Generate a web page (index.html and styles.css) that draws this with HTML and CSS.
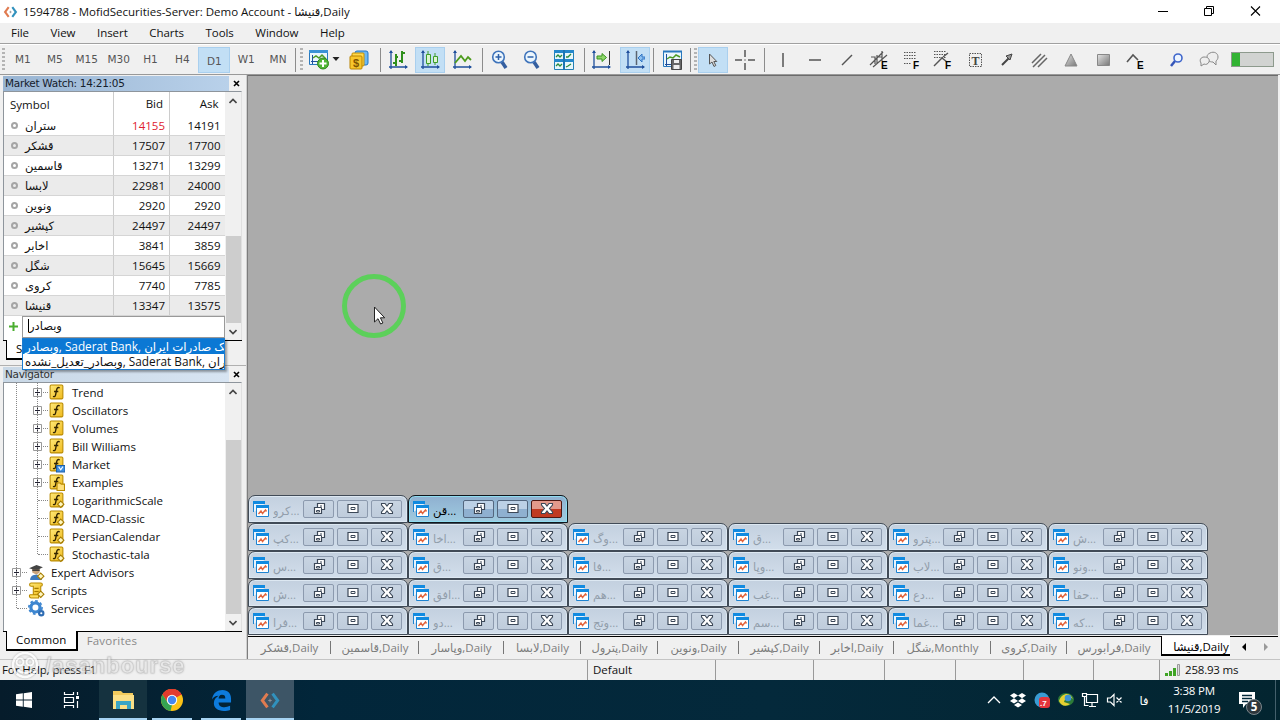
FILE: index.html
```
<!DOCTYPE html>
<html lang="en">
<head>
    <meta charset="UTF-8">
    <meta name="viewport" content="width=device-width, initial-scale=1.0">
    <title>1594788 - MofidSecurities-Server: Demo Account</title>
    <link rel="stylesheet" href="styles.css">
</head>
<body>
    <svg class="defs" width="0" height="0">
        <linearGradient id="gold" x1="0" y1="0" x2="1" y2="1"><stop offset="0" stop-color="#ffe978"/><stop offset="1" stop-color="#efb91c"/></linearGradient>
        <linearGradient id="grey" x1="0" y1="0" x2="1" y2="1"><stop offset="0" stop-color="#e4e4e4"/><stop offset="1" stop-color="#777"/></linearGradient>
        <symbol id="logo" viewBox="0 0 24 20">
            <path d="M9 2 L3 10 L9 18" fill="none" stroke="#e07b50" stroke-width="3.5"/>
            <path d="M15 2 L21 10 L15 18" fill="none" stroke="#3191bd" stroke-width="3.5"/>
            <path d="M12 8v4M10 10h4" stroke="#8b9097" stroke-width="1.2"/>
        </symbol>
        <symbol id="axes" viewBox="0 0 20 20">
            <path d="M3 1v18M1 17h18" fill="none" stroke="#1f4f9c" stroke-width="1.3"/>
            <path d="M3 0l-2 3h4zM20 17l-3-2v4z" fill="#1f4f9c"/>
        </symbol>
        <symbol id="f" viewBox="0 0 16 16">
            <rect x="2" y="1" width="12" height="13" rx="1" fill="url(#gold)" stroke="#b98a00"/>
            <path d="M11 3.7c-2-1-2.6.3-3 2.3l-.8 4c-.4 1.8-1 2.3-2.5 1.7M5.7 7h4" fill="none" stroke="#332500" stroke-width="1.3"/>
        </symbol>
        <symbol id="dia" viewBox="0 0 16 16"><path d="M12 8.5l3 3-3 3-3-3z" fill="#fff6bf" stroke="#a67c00"/></symbol>
        <symbol id="win-icon" viewBox="0 0 18 18">
            <path d="M1.5 12V1.5h11V4" fill="#e9f4fd" stroke="#1d83d1"/>
            <path d="M1 1h12v3H1z" fill="#118ae0"/>
            <path d="M4.500 5.500h12v11h-12z" fill="#fff" stroke="#1d83d1"/>
            <path d="M4 5h13v3H4z" fill="#118ae0"/>
            <path d="M6.500 14l2.500-3 1.500 2.500 3-3.500 1 1.500" fill="none" stroke="#e2643c" stroke-width="1.400"/>
        </symbol>
        <symbol id="b-restore" viewBox="0 0 14 14">
            <path d="M5.500 1.500h7v6h-3v4h-7v-6h3z" fill="#fff" stroke="#3c4858" stroke-width="1.200"/>
            <path d="M4.500 8.500h3v1.500h-3zM5.500 5.500h4v3M8 4h2" fill="none" stroke="#3c4858"/>
        </symbol>
        <symbol id="b-max" viewBox="0 0 14 14">
            <path d="M2 2.500h10v8H2z" fill="#fff" stroke="#3c4858" stroke-width="1.200"/>
            <path d="M5 5.500h4v2H5z" fill="none" stroke="#3c4858"/>
        </symbol>
        <symbol id="b-close" viewBox="0 0 14 14">
            <path d="M1.500 1.500h3.500L7 4l2-2.500h3.500V3L9.500 6.500l3 3.500v1.500H9L7 9l-2 2.500H1.500V10l3-3.500L1.500 3z" fill="#fff" stroke="#3c4858" stroke-width="1.100"/>
        </symbol>
    </svg>

    <header class="titlebar">
        <svg class="app-icon" width="17" height="12"><use href="#logo"/></svg>
        <span class="title">1594788 - MofidSecurities-Server: Demo Account - قنیشا,Daily</span>
        <div class="caption">
            <svg width="46" height="22"><path d="M17 10.500h10" stroke="#000"/></svg>
            <svg width="46" height="22"><path d="M17.500 7.500h7v7h-7zM19.500 7V5.500h7v7H25" fill="none" stroke="#000"/></svg>
            <svg width="46" height="22"><path d="M18 5.500l9 9M27 5.500l-9 9" stroke="#000" stroke-width="1.100"/></svg>
        </div>
    </header>

    <nav class="menubar">
        <span>File</span><span>View</span><span>Insert</span><span>Charts</span><span>Tools</span><span>Window</span><span>Help</span>
    </nav>

    <div class="toolbar">
        <div class="group periods">
            <i class="grip"></i>
            <span>M1</span><span>M5</span><span>M15</span><span>M30</span><span>H1</span><span>H4</span><span class="on">D1</span><span>W1</span><span>MN</span>
        </div>
        <div class="group new-chart">
            <i class="grip"></i>
            <svg width="22" height="21" viewBox="0 0 22 21">
                <path d="M1.500 1.500h18v14h-18z" fill="#eaf6fd" stroke="#2878be"/><path d="M1 1h19v3H1z" fill="#3b92d6"/>
                <path d="M4.500 6v9M3 12.500h14" stroke="#1f4f9c"/><path d="M5 9l3-2 3 2 3-3 4 4" fill="none" stroke="#4c9b25" stroke-width="1.500"/>
                <circle cx="15" cy="14.500" r="5.500" fill="#51b535" stroke="#2f8a1d"/><path d="M15 11v7M11.500 14.500h7" stroke="#fff" stroke-width="2"/>
            </svg>
            <svg class="drop" width="8" height="5"><path d="M.5 0h7L4 4z" fill="#222"/></svg>
            <svg class="money" width="20" height="20" viewBox="0 0 20 20">
                <rect x="6" y="1" width="13" height="14" rx="2" fill="#6db8f2" stroke="#2076c6"/>
                <rect x="3" y="3" width="12" height="13" rx="1" fill="#ffd94c" stroke="#c48e00"/>
                <rect x="1" y="6" width="12" height="13" rx="1" fill="#f8c62c" stroke="#b98300"/>
                <text x="4" y="17" class="dollar">$</text>
            </svg>
        </div>
        <div class="group left">
            <b><svg width="20" height="20"><use href="#axes"/><path d="M8 4v12M5 13h3M8 7h2M14 1v12M11 11h3M14 3h3" stroke="#2f8f1c" stroke-width="2"/></svg></b>
            <b class="on"><svg width="20" height="20"><use href="#axes"/><path d="M8 1v15M15 3v12" stroke="#3d9c28"/><path d="M6.500 4.500h4v9h-4zM13.500 6.500h4v6h-4z" fill="#ddf5cf" stroke="#3d9c28"/></svg></b>
            <b><svg width="20" height="20"><use href="#axes"/><path d="M3 13l6-7 4 5 3-4 3 3" fill="none" stroke="#4c9b1c" stroke-width="1.800"/></svg></b>
        </div>
        <div class="group left">
            <b><svg width="18" height="20"><path d="M11 12l4 6" stroke="#355f9f" stroke-width="3.500"/><circle cx="7.500" cy="7" r="5.800" fill="#ecf6fd" stroke="#3f74bb" stroke-width="1.600"/><path d="M4.500 7h6M7.500 4v6" stroke="#2d60a9" stroke-width="1.500"/></svg></b>
            <b><svg width="18" height="20"><path d="M11 12l4 6" stroke="#355f9f" stroke-width="3.500"/><circle cx="7.500" cy="7" r="5.800" fill="#ecf6fd" stroke="#3f74bb" stroke-width="1.600"/><path d="M4.500 7h6" stroke="#2d60a9" stroke-width="1.500"/></svg></b>
            <b><svg width="20" height="20"><path d="M.5.500h19v19H.5z" fill="#e8f7fb" stroke="#2380b5"/><path d="M0 1.500h20M0 10.500h20" stroke="#2487cb" stroke-width="3"/><path d="M10 0v20" stroke="#1c75b4" stroke-width="2"/><path d="M2 7l2-2 2 2 2-2M12 7l2 0 3-3M2 16l2-2 2 2 2-2M12 17l2-1 3-2" fill="none" stroke="#2b8a3e" stroke-width="1.300"/></svg></b>
        </div>
        <div class="group scroll">
            <b><svg width="20" height="20"><use href="#axes"/><path d="M18.500 1v14" stroke="#333"/><path d="M6 6h5V3.500l4.500 4-4.500 4V9H6z" fill="#8ed66a" stroke="#3a9420"/></svg></b>
            <b class="on"><svg width="20" height="20"><use href="#axes"/><path d="M11.500 1v14" stroke="#5a6470" stroke-width="1.500"/><path d="M20 7h-3V4l-4 4 4 4V9h3z" fill="#8cc1f1" stroke="#2f73c2"/></svg></b>
        </div>
        <div class="group template">
            <b><svg width="21" height="20"><path d="M1.500 1.500h18v15h-18z" fill="#eaf6fd" stroke="#2878be"/><path d="M1 1.500h19" stroke="#2878be" stroke-width="2"/><path d="M4.500 4v12M3 14.500h9" stroke="#1f4f9c"/><path d="M5 9l3-2 3 1 3-3 4 2" fill="none" stroke="#4c9b25" stroke-width="1.500"/><path d="M9.500 9.500h10v10h-10z" fill="#666" stroke="#444"/><path d="M12 10h5v3h-5zM11.500 15h6v4h-6z" fill="#eee"/></svg></b>
        </div>
        <div class="group cursors">
            <i class="grip"></i>
            <b class="on"><svg width="10" height="16"><path d="M1.500 2v10l2.500-2 2 4.500 1.800-1-2-4h3z" fill="#ddd" stroke="#555"/></svg></b>
            <b><svg width="20" height="20"><path d="M10 0v7M10 13v7M0 10h7M13 10h7M9.500 10h1" stroke="#555" stroke-width="1.500"/></svg></b>
        </div>
        <div class="group objects">
            <b><svg width="20" height="20"><path d="M10 3v14" stroke="#555" stroke-width="1.500"/></svg></b>
            <b><svg width="20" height="20"><path d="M4 10h12" stroke="#555" stroke-width="1.500"/></svg></b>
            <b><svg width="20" height="20"><path d="M5 15L15 5" stroke="#555" stroke-width="1.500"/></svg></b>
            <b><svg width="20" height="20"><path d="M1 15L14 2M4 17L18 5M2 7l4 0v7M8 5v9M8 7h5M13 1v10" fill="none" stroke="#555" stroke-width="1.200"/><text x="12" y="19" class="tag">E</text></svg></b>
            <b><svg width="20" height="20"><path d="M3 2.500h12M3 5.500h12M3 8.500h12M3 13.500h7" stroke="#555" stroke-dasharray="1.500 1"/><text x="12" y="19" class="tag">F</text></svg></b>
            <b><svg width="20" height="20"><path d="M1 1.500h12M1 4.500h12M1 7.500h12" stroke="#555" stroke-dasharray="1.500 1"/><path d="M1 16L9 8l5 4M10 7l5-4" fill="none" stroke="#555" stroke-width="1.400"/><text x="12" y="19" class="tag">F</text></svg></b>
            <b><svg width="20" height="20"><path d="M4.500 3.500h12v13h-12z" fill="none" stroke="#555" stroke-dasharray="1.500 1"/><text x="6.500" y="14.500" class="serif">T</text></svg></b>
            <b><svg width="20" height="20"><path d="M5 15L12 8" stroke="#444" stroke-width="2"/><path d="M9 6l6-2-2 6z" fill="#999" stroke="#444"/></svg></b>
            <b><svg width="20" height="20"><path d="M3 13L12 4M4 17L16 5M9 17L18 8" stroke="#666" stroke-width="1.500"/></svg></b>
            <b><svg width="20" height="20"><path d="M10 4l6 12H4z" fill="url(#grey)" stroke="#888"/></svg></b>
            <b><svg width="20" height="20"><path d="M4.500 4.500h12v11h-12z" fill="url(#grey)" stroke="#888"/></svg></b>
            <b><svg width="20" height="20"><path d="M2 12l6-7 5 5" fill="none" stroke="#555" stroke-width="1.600"/><text x="12" y="19" class="tag">E</text></svg></b>
        </div>
        <div class="group extras">
            <b><svg width="20" height="20"><path d="M4 16l4-5" stroke="#3555b8" stroke-width="2.500"/><circle cx="11" cy="8" r="4" fill="#edf5ff" stroke="#3f66cb" stroke-width="1.600"/></svg></b>
            <b><svg width="20" height="20"><path d="M11 3c4-2 8 0 8 4 0 2-1 3-2 4v4l-3-3c-4 0-6-2-6-5 0-2 1-3 3-4z" fill="#eee" stroke="#888"/><path d="M5 7c4 0 6 2 5 5-1 2-3 3-5 2l-3 2v-3C0 10 2 7 5 7z" fill="#eee" stroke="#888"/></svg></b>
            <div class="meter"><i></i></div>
        </div>
    </div>

    <main class="workspace">
        <aside class="side">
            <section class="panel market">
                <h2 class="active"><span>Market Watch: 14:21:05</span><svg width="7" height="7"><path d="M1 1l5 5M6 1l-5 5" stroke="#000" stroke-width="1.600"/></svg></h2>
                <div class="panel-body">
                    <div class="quotes">
                        <div class="quote head"><span class="sym">Symbol</span><span>Bid</span><span>Ask</span></div>
                        <div id="quotes"></div>
                        <div class="add"><svg width="9" height="9"><path d="M4.500 0v9M0 4.500h9" stroke="#4aae2f" stroke-width="2"/></svg><div class="entry"><i></i>وبصادر</div></div>
                    </div>
                    <div class="scrollbar">
                        <svg width="8" height="6"><path d="M.5 5L4 1.500 7.500 5" fill="none" stroke="#444" stroke-width="1.600"/></svg>
                        <div class="thumb"></div>
                        <svg width="8" height="6"><path d="M.5 1L4 4.500 7.500 1" fill="none" stroke="#444" stroke-width="1.600"/></svg>
                    </div>
                </div>
                <div class="tabs"><span class="current">S</span></div>
                <div class="suggest">
                    <div class="picked">وبصادر, Saderat Bank, بانک صادرات ایران</div>
                    <div>وبصادر_تعدیل_نشده, Saderat Bank, بانک صادرات ایران</div>
                </div>
            </section>

            <section class="panel navigator">
                <h2><span>Navigator</span><svg width="7" height="7"><path d="M1 1l5 5M6 1l-5 5" stroke="#000" stroke-width="1.600"/></svg></h2>
                <div class="panel-body">
                    <div class="tree" id="tree"></div>
                    <div class="scrollbar">
                        <svg width="8" height="6"><path d="M.5 5L4 1.500 7.500 5" fill="none" stroke="#444" stroke-width="1.600"/></svg>
                        <div class="thumb"></div>
                        <svg width="8" height="6"><path d="M.5 1L4 4.500 7.500 1" fill="none" stroke="#444" stroke-width="1.600"/></svg>
                    </div>
                </div>
                <div class="tabs"><span class="current">Common</span><span>Favorites</span></div>
            </section>
        </aside>

        <section class="charts">
            <div class="mdi" id="mdi"></div>
            <div class="chart-tabs" id="chart-tabs"></div>
            <div class="pointer">
                <svg width="12" height="19"><path d="M1.500 1v15l3.500-3.300 2.600 5.300 2.300-1-2.500-5.200h4.300z" fill="#fff" stroke="#222"/></svg>
            </div>
        </section>
    </main>

    <footer class="statusbar">
        <span class="help">For Help, press F1</span>
        <span class="profile">Default</span>
        <span class="s98"></span><span class="s71"></span><span class="s71"></span><span class="s68"></span><span class="s70"></span><span class="s66"></span>
        <span class="ping"><svg width="15" height="12"><path d="M0 9h3v3H0zM4 7h3v5H4zM8 4h3v8H8z" fill="#3fa425"/><path d="M12.500.500h2v11h-2z" fill="#ddd" stroke="#999"/></svg>258.93 ms</span>
        <div class="watermark">
            <svg width="30" height="28"><circle cx="15" cy="13" r="12" fill="none" stroke="#fff" stroke-width="2.500"/><circle cx="10" cy="10" r="3.500" fill="none" stroke="#fff" stroke-width="2"/><circle cx="20" cy="10" r="3.500" fill="none" stroke="#fff" stroke-width="2"/><path d="M8 18c4 4 10 4 14 0" fill="none" stroke="#fff" stroke-width="2"/></svg>
            <span>/asanbourse</span>
        </div>
    </footer>

    <div class="taskbar">
        <div class="task start"><svg width="16" height="16"><path d="M0 2.300L6.800 1.300v6.300H0zM7.700 1.200L16 0v7.600H7.700zM0 8.500h6.800v6.300L0 13.800zM7.700 8.500H16V16l-8.300-1.200z" fill="#fff"/></svg></div>
        <div class="task"><svg width="18" height="16"><path d="M1.500 0v2.500h9V0M1.500 16v-2.500h9V16M1.500 5.500h9v5h-9zM14.500 0v3M14.500 9v7" fill="none" stroke="#fff" stroke-width="1.200"/><path d="M13 4h3v3h-3z" fill="#fff"/></svg></div>
        <div class="task open explorer"><svg width="23" height="20"><path d="M1 1h8l2 2h10v15H1z" fill="#f2ca5c"/><path d="M1 5h21v14H1z" fill="#fbdf86"/><path d="M4 19v-8h15v8h-4v-4H8v4z" fill="#3aa5c6"/></svg></div>
        <div class="task open chrome"><svg width="22" height="22" viewBox="0 0 22 22"><circle cx="11" cy="11" r="11" fill="#fbc116"/><path d="M11 11L1.500 5.500A11 11 0 0 1 20.500 5.500z" fill="#e33b2e"/><path d="M11 6h9.800A11 11 0 0 0 1.500 5.500L6.700 13.500z" fill="#e33b2e"/><path d="M1.500 5.500L6.700 13.500 11 16l-1.500 5.900A11 11 0 0 1 1.500 5.500z" fill="#35a352"/><circle cx="11" cy="11" r="5.200" fill="#fff"/><circle cx="11" cy="11" r="4.200" fill="#4687f0"/></svg></div>
        <div class="task open edge"><svg width="21" height="21" viewBox="0 0 22 22"><path d="M1 10C2 3 7 0 12 0c6 0 9 4 9 9v4H8c0 4 3 5 6 5 2 0 4-.5 6-1.500V21c-2 .8-4 1-6.500 1C7 22 3 19 3 14c0-4 2-6 5-8-4 0-6 2-7 4zM8 9h7c0-3-1-4-3.500-4S8 7 8 9z" fill="#0d7bdc"/></svg></div>
        <div class="task open mt"><svg width="22" height="17"><use href="#logo"/></svg></div>
        <div class="tray">
            <svg width="24" height="20"><path d="M6 13l6-6 6 6" fill="none" stroke="#fff" stroke-width="1.300"/></svg>
            <svg width="24" height="20"><path d="M8 3l4 2.600-4 2.600-4-2.600zM16 3l4 2.600-4 2.600-4-2.600zM8 8.300l4 2.600-4 2.600-4-2.600zM16 8.300l4 2.600-4 2.600-4-2.600zM12 12.500l4 2.500-4 2.500L8 15z" fill="#fff"/></svg>
            <svg width="24" height="20"><circle cx="12" cy="10" r="7.500" fill="#3a9bd3"/><rect x="9" y="7" width="11" height="11" rx="3" fill="#e3343b"/><text x="10" y="16" class="count">.7</text></svg>
            <svg width="24" height="20"><ellipse cx="12" cy="9.500" rx="8" ry="6.500" fill="#2d7b38"/><path d="M5 11c2-7 9-9 12-5l2 3c-4-3-8-1-9 3l6 2c-4 3-9 2-11-3z" fill="#e6cf32"/><circle cx="14" cy="8" r="3.300" fill="#3e93d6"/></svg>
            <svg width="24" height="20"><path d="M8.500 4.500h11v8h-11zM11 16.500h7M14 13v3M4.500 3.500h4v3h-4zM6.500 7v8.500h4" fill="none" stroke="#fff" stroke-width="1.200"/></svg>
            <svg width="24" height="20"><path d="M5.500 8v4h3l3.500 3.500v-11L8.500 8zM14.500 7.500l5 5M19.500 7.500l-5 5" fill="none" stroke="#fff" stroke-width="1.200"/></svg>
            <span class="lang">فا</span>
            <div class="clock"><span>3:38 PM</span><span>11/5/2019</span></div>
            <div class="notice">
                <svg width="18" height="18"><path d="M1 1h16v12H8l-3 4v-4H1z" fill="#fff"/><path d="M4 4.500h10M4 7.500h10M4 10.500h6" stroke="#04293a" stroke-width="1.300"/></svg>
                <em>5</em>
            </div>
        </div>
    </div>

    <script src="script.js"></script>
</body>
</html>
```

FILE: styles.css
```
* {
    box-sizing: border-box;
}
body {
    margin: 0;
    width: 1280px;
    height: 720px;
    overflow: hidden;
    display: flex;
    flex-direction: column;
    background: #f0f0f0;
    color: #111;
    font-family: "Open Sans", "DejaVu Sans", sans-serif;
    font-size: 11.5px;
    white-space: nowrap;
}
svg {
    display: block;
    flex: none;
}
.defs {
    position: absolute;
}

/* title and menu */
.titlebar {
    height: 23px;
    display: flex;
    align-items: center;
    background: #fff;
    padding-left: 2px;
}
.title {
    margin-left: 4px;
    flex: 1;
}
.caption {
    display: flex;
    margin-right: 1px;
}
.menubar {
    height: 21px;
    display: flex;
    align-items: center;
    gap: 21.6px;
    padding: 0 0 2px 11px;
    letter-spacing: -.06px;
    border-bottom: 1px solid #a0a0a0;
}

/* toolbar */
.toolbar {
    height: 31px;
    display: flex;
    border-top: 1px solid #fff;
    border-bottom: 1px solid #999;
}
.group {
    width: 102px;
    display: flex;
    align-items: center;
    justify-content: center;
    position: relative;
}
.group::after {
    content: "";
    position: absolute;
    right: 0;
    top: 3px;
    bottom: 2px;
    width: 1px;
    background: #8c8c8c;
}
.group b {
    width: 32px;
    height: 26px;
    display: flex;
    align-items: center;
    justify-content: center;
    border: solid transparent;
    border-width: 0 1px;
    background-clip: padding-box;
}
.group.left {
    justify-content: flex-start;
    padding-left: 1px;
}
.on {
    background-color: #c2dff5;
    box-shadow: inset 0 0 0 1px #a9cfee;
}
.grip {
    width: 3px;
    height: 24px;
    background: repeating-linear-gradient(#b4b4b4 0 2px, transparent 2px 4px);
}
.periods {
    width: 296px;
    justify-content: flex-start;
    padding-left: 2px;
    color: #555;
    font-family: "DejaVu Sans", sans-serif;
    font-size: 10.5px;
}
.periods .grip {
    margin-right: 2px;
}
.periods span {
    width: 31.9px;
    height: 26px;
    line-height: 25px;
    text-align: center;
}
.periods .on {
    line-height: 28px;
}
.new-chart {
    width: 85px;
    justify-content: flex-start;
    padding-left: 4px;
}
.new-chart .grip {
    margin-right: 5px;
}
.drop {
    margin: 0 9px 0 2px;
}
.dollar {
    font: bold 11px "Liberation Sans", sans-serif;
    fill: #805500;
}
.scroll {
    width: 69px;
    justify-content: flex-start;
    gap: 2px;
}
.template {
    width: 37px;
}
.cursors {
    width: 74px;
    justify-content: flex-start;
    padding-left: 3px;
}
.objects {
    width: 388px;
}
.objects::after,
.extras::after {
    display: none;
}
.tag {
    font: bold 10px "Liberation Sans", sans-serif;
}
.serif {
    font: bold 12px "Liberation Serif", serif;
    fill: #444;
}
.extras {
    flex: 1;
    justify-content: flex-start;
    padding-left: 8px;
}
.meter {
    width: 43px;
    height: 15px;
    margin-left: 6px;
    border: 1px solid #8d9a8d;
    background: #d1d3d1;
}
.meter i {
    display: block;
    width: 8px;
    height: 13px;
    background: #32b333;
}

/* docked panels */
.workspace {
    height: 584px;
    display: flex;
}
.side {
    width: 247px;
    border-right: 1px solid #cfcfcf;
    display: flex;
    flex-direction: column;
}
.panel {
    padding: 0 4px 0 3px;
    display: flex;
    flex-direction: column;
}
.market {
    height: 290px;
    position: relative;
}
.navigator {
    height: 294px;
    border-top: 1px solid #b0b0b0;
}
.panel h2 {
    margin: 0;
    height: 16px;
    display: flex;
    align-items: center;
    font: 10.5px "DejaVu Sans", sans-serif;
    letter-spacing: -.3px;
    color: #333;
}
.panel h2 span {
    width: 226px;
    height: 15px;
    line-height: 14px;
    padding-left: 2px;
    margin-right: 4px;
    background: linear-gradient(90deg, #c9d8e6, #d7e4f2);
}
.panel h2.active span {
    background: linear-gradient(90deg, #98b4d2, #b9d1ea);
    color: #15202c;
}
.panel-body {
    display: flex;
    background: #fff;
    border: 1px solid #8e959c;
    border-bottom: 0;
    border-right-color: #e0e0e0;
}
.market .panel-body {
    height: 249px;
}
.navigator .panel-body {
    height: 249px;
}
.quotes {
    width: 221px;
}
.quote {
    height: 20px;
    display: flex;
    border-bottom: 1px solid #d5d5d5;
    background: #fff;
    line-height: 19px;
}
.quote:nth-child(even) {
    background: #ebebeb;
}
.quote.head {
    height: 24px;
    line-height: 23px;
    border: 0;
}
.quote span {
    width: 55.5px;
    padding-right: 3.5px;
    text-align: right;
    border-left: 1px solid #ccc;
}
.quote span.sym {
    width: 109px;
    padding-left: 6px;
    display: flex;
    align-items: center;
    gap: 7px;
    border: 0;
}
.quote.head span {
    padding-right: 5.5px;
}
.sym i {
    width: 7px;
    height: 7px;
    margin-left: 1px;
    border: 2px solid #a5a5a5;
    border-radius: 50%;
}
.falling {
    color: #e01b2f;
}
.add {
    height: 21px;
    display: flex;
    align-items: center;
    padding-left: 5px;
}
.entry {
    flex: 1;
    height: 22px;
    margin-left: 4px;
    padding: 0 0 2px 5px;
    display: flex;
    align-items: center;
    border: 1px solid #999;
}
.entry i {
    width: 1px;
    height: 13px;
    background: #000;
}
.scrollbar {
    width: 16px;
    margin-left: auto;
    display: flex;
    flex-direction: column;
    align-items: center;
    background: #f0f0f0;
    padding: 6px 0 5px;
}
.thumb {
    width: 15px;
    background: #cdcdcd;
}
.market .thumb {
    height: 87px;
    margin: 132px 0 auto;
}
.navigator .thumb {
    height: 174px;
    margin: 45px 0 auto;
}
.tabs {
    height: 20px;
    display: flex;
    border-top: 1px solid #000;
    color: #8a8a8a;
    letter-spacing: .2px;
    line-height: 18px;
}
.tabs span {
    padding: 0 9px;
}
.tabs .current {
    height: 20px;
    margin: -1px 0 0 3px;
    background: #fff;
    border: solid #000;
    border-width: 0 2px 2px 1px;
    color: #000;
}
.market .current {
    width: 60px;
}
.suggest {
    position: absolute;
    left: 22px;
    top: 263px;
    width: 203px;
    height: 32px;
    padding: 0 0 0 2px;
    overflow: hidden;
    background: #fff;
    border: 1px solid #1c7cd0;
    box-shadow: 2px 2px 2px rgba(0, 0, 0, .35);
    font-size: 11.8px;
    line-height: 15px;
    z-index: 1;
}
.suggest .picked {
    margin-left: -2px;
    padding-left: 2px;
    background: #0b78d4;
    color: #fff;
}

/* navigator tree */
.tree {
    width: 222px;
    position: relative;
}
.node {
    height: 18px;
    display: flex;
    align-items: center;
    line-height: 17px;
    padding-left: 8px;
}
.node.deep {
    padding-left: 29px;
}
.node svg {
    margin-right: 6px;
}
.node.deep svg {
    margin-right: 7px;
}
.node .box,
.node.deep .box {
    margin-right: 4px;
    background: #fff;
}
.rail {
    position: absolute;
    top: 0;
    border-left: 1px dotted #888;
}
.rail.outer {
    left: 12px;
    height: 225px;
}
.rail.inner {
    left: 33px;
    height: 171px;
}
.dash {
    width: 10px;
    border-top: 1px dotted #888;
}
.node .box + .dash {
    width: 5px;
    margin-left: -3px;
    margin-right: 1px;
}
.node.deep .box + .dash {
    margin-right: 0;
}
.leaf {
    margin-left: 5px;
}
.node.deep .leaf {
    margin-right: 0;
}
.node:not(.deep) .leaf {
    margin-right: 1px;
}

/* chart windows */
.charts {
    flex: 1;
    display: flex;
    flex-direction: column;
    position: relative;
    border-left: 1px solid #7d7d7d;
}
.mdi {
    height: 560px;
    margin-right: 2px;
    display: flex;
    flex-direction: column;
    justify-content: flex-end;
    background: #ababab;
    border-top: 1px solid #6b6b6b;
}
.mdi-row {
    display: flex;
}
.win {
    width: 160px;
    height: 28px;
    display: flex;
    align-items: center;
    padding: 0 2px 1px 3px;
    border: 1.500px solid #414b57;
    border-radius: 7px 7px 0 0;
    background: linear-gradient(#c3d0df, #d2deeb);
    box-shadow: inset 0 0 0 1px #dde8f2;
    color: #929eab;
}
.win .name {
    width: 32px;
    height: 20px;
    margin-left: 3px;
    line-height: 23px;
    overflow: hidden;
}
.win .btn {
    width: 31px;
    height: 18px;
    margin-right: 3px;
    display: flex;
    align-items: center;
    justify-content: center;
    border: 1px solid #8c9aae;
    border-radius: 2px;
    background: linear-gradient(#c8d4e2, #bfccdc);
    flex: none;
}
.win.front {
    border-color: #10161d;
    background: linear-gradient(#8fb0d0, #9fcbe0);
    box-shadow: inset 0 0 0 1px #8fdcf0;
    color: #000;
}
.win.front .btn {
    border-color: #53677f;
    background: linear-gradient(#bcd1e6 50%, #8fb0d0 50%);
}
.win.front .btn.close {
    border-color: #4d1712;
    background: linear-gradient(#e29a8c 50%, #c03a22 50%);
}
.chart-tabs {
    height: 20px;
    display: flex;
    margin: 1px 2px 0 0;
    border-top: 1px solid #000;
    color: #7c7c7c;
}
.chart-tabs span {
    height: 20px;
    line-height: 21px;
    display: flex;
    justify-content: center;
    position: relative;
}
.chart-tabs span::after {
    content: "";
    position: absolute;
    right: 0;
    top: 4px;
    height: 13px;
    border-right: 1px solid #777;
}
.chart-tabs .last::after,
.chart-tabs .current::after {
    display: none;
}
.chart-tabs .current {
    height: 20px;
    margin-top: -1px;
    padding-left: 10px;
    background: #fff;
    border: solid #000;
    border-width: 0 0 2px 1px;
    color: #000;
}
.chart-tabs svg {
    margin: 6px 0 0 11px;
}
.pointer {
    position: absolute;
    left: 94px;
    top: 199px;
    width: 64px;
    height: 64px;
    padding: 27px 0 0 26px;
    border: 5px solid #5cd05a;
    border-radius: 50%;
}

/* status bar */
.statusbar {
    height: 21px;
    display: flex;
    position: relative;
    line-height: 19px;
    border-top: 1px solid #c4c4c4;
}
.statusbar > span {
    border-right: 1px solid #999;
}
.statusbar .help {
    width: 588px;
    padding-left: 2px;
    letter-spacing: -.1px;
}
.statusbar .profile {
    width: 128px;
    padding-left: 5px;
}
.s98 {
    width: 98px;
}
.s71 {
    width: 71px;
}
.s68 {
    width: 68px;
}
.s70 {
    width: 70px;
}
.s66 {
    width: 66px;
}
.statusbar .ping {
    display: flex;
    align-items: center;
    gap: 5px;
    padding: 0 0 1px 5px;
    letter-spacing: -.2px;
    border: 0;
}
.watermark {
    position: absolute;
    left: 10px;
    top: -8px;
    display: flex;
    align-items: center;
    color: rgba(255, 255, 255, .6);
    font: bold 22px "Liberation Sans", sans-serif;
    letter-spacing: 1px;
    -webkit-text-stroke: 1px rgba(150, 150, 150, .4);
    filter: drop-shadow(0 0 1px rgba(0, 0, 0, .35));
    opacity: .75;
}
.watermark span {
    margin-left: 5px;
}

/* taskbar */
.taskbar {
    height: 40px;
    display: flex;
    background: linear-gradient(90deg, #061c2b, #02263a 25%, #04293b 60%, #032530);
    color: #fff;
}
.task {
    width: 48px;
    height: 40px;
    display: flex;
    align-items: center;
    justify-content: center;
}
.task.open {
    border-bottom: 2px solid #a6d3f2;
    padding-top: 2px;
}
.explorer {
    margin-left: 3px;
    background: #15323f;
}
.chrome {
    width: 40px;
    margin-left: 5px;
}
.edge {
    width: 40px;
    margin: 0 5px 0 9px;
}
.mt {
    background: #3d5566;
}
.tray {
    flex: 1;
    display: flex;
    align-items: center;
    justify-content: flex-end;
    padding-right: 4px;
}
.tray > svg {
    width: 24px;
}
.lang {
    width: 36px;
    text-align: center;
}
.clock {
    width: 64px;
    display: flex;
    flex-direction: column;
    align-items: center;
    line-height: 18px;
    letter-spacing: -.2px;
}
.notice {
    width: 50px;
    height: 40px;
    padding: 11px 0 0 12px;
    border-right: 1px solid #44606c;
    position: relative;
}
.notice em {
    position: absolute;
    left: 20px;
    top: 19px;
    width: 16px;
    height: 16px;
    line-height: 14px;
    text-align: center;
    font-style: normal;
    font-weight: bold;
    background: #2d363c;
    border: 1px solid #7b868c;
    border-radius: 50%;
}
.count {
    font: bold 8px "Liberation Sans", sans-serif;
    fill: #fff;
}
```

FILE: script.js
```
const quotes = [
    ["ستران", 14155, 14191, true],
    ["قشکر", 17507, 17700],
    ["قاسمین", 13271, 13299],
    ["لابسا", 22981, 24000],
    ["ونوین", 2920, 2920],
    ["کپشیر", 24497, 24497],
    ["اخابر", 3841, 3859],
    ["شگل", 15645, 15669],
    ["کروی", 7740, 7785],
    ["قنیشا", 13347, 13575]
];

document.getElementById("quotes").innerHTML = quotes.map(([name, bid, ask, falling]) => `
    <div class="quote"><span class="sym"><i></i>${name}</span><span class="${falling ? "falling" : ""}">${bid}</span><span>${ask}</span></div>`).join("");

const f = '<use href="#f"/>';
const icons = {
    f: f,
    market: f + '<path d="M8 9h8v6H8z" fill="#3c8de0" stroke="#1c5ea8"/><path d="M10 10l2 3 2-3" fill="none" stroke="#fff"/>',
    folder: f + '<path d="M8.500 8.500h3l1 1h3v6h-7z" fill="#ffe07c" stroke="#b98a00"/>',
    item: f + '<use href="#dia"/>',
    expert: '<path d="M1 4l7-3 6 2-6 3z" fill="#444"/><path d="M4 5h7v3l-3 2-4-2z" fill="#c9a37a"/><path d="M4 5h7v1.500H4z" fill="#333"/><path d="M2 15c0-4 3-5 6-5s5 2 5 5z" fill="#3c79bd"/><use href="#dia"/>',
    script: '<path d="M3 1h9c2 0 2 3 0 3v8H5V4H3C1 4 1 1 3 1z" fill="url(#gold)" stroke="#b98a00"/><path d="M2 12h8v3H3c-2 0-2-3-1-3z" fill="#ffdf60" stroke="#b98a00"/><path d="M6 6h4M6 9h4" stroke="#a67c00"/><use href="#dia"/>',
    service: '<circle cx="7" cy="7" r="4.300" fill="none" stroke="#3d86d0" stroke-width="3"/><circle cx="7" cy="7" r="6.200" fill="none" stroke="#3d86d0" stroke-width="1.600" stroke-dasharray="2.500 2.300"/><circle cx="12.500" cy="12.500" r="2" fill="#fff" stroke="#2f6db4" stroke-width="2"/>'
};
const nodes = [
    ["Trend", "f", true, true],
    ["Oscillators", "f", true, true],
    ["Volumes", "f", true, true],
    ["Bill Williams", "f", true, true],
    ["Market", "market", true, true],
    ["Examples", "folder", true, true],
    ["LogarithmicScale", "item", true, false],
    ["MACD-Classic", "item", true, false],
    ["PersianCalendar", "item", true, false],
    ["Stochastic-tala", "item", true, false],
    ["Expert Advisors", "expert", false, true],
    ["Scripts", "script", false, true],
    ["Services", "service", false, false]
];
const box = '<svg class="box" width="9" height="9"><path d="M.5.5h8v8h-8z" fill="#fff" stroke="#999"/><path d="M2 4.500h5M4.500 2v5" stroke="#223"/></svg>';

document.getElementById("tree").innerHTML =
    '<i class="rail outer"></i><i class="rail inner"></i>' +
    nodes.map(([label, icon, deep, expandable]) => `
    <div class="node ${deep ? "deep" : ""}">${expandable ? box + '<i class="dash"></i>' : '<i class="dash leaf"></i>'}<svg width="17" height="17" viewBox="0 0 16 16">${icons[icon]}</svg>${label}</div>`).join("");

const windows = [
    ["کرو", "قن"],
    ["کپ", "اخا", "وگ", "ق", "پترو", "ش"],
    ["س", "ق", "فا", "وپا", "لاب", "ونو"],
    ["ش", "افق", "هم", "غب", "دع", "حفا"],
    ["فرا", "دو", "وتج", "سم", "غما", "که"]
];

document.getElementById("mdi").innerHTML = windows.map(row => `
    <div class="mdi-row">${row.map(name => `
        <div class="win ${name === "قن" ? "front" : ""}">
            <svg width="18" height="18"><use href="#win-icon"/></svg>
            <span class="name">${name}...</span>
            <span class="btn"><svg width="14" height="14"><use href="#b-restore"/></svg></span>
            <span class="btn"><svg width="14" height="14"><use href="#b-max"/></svg></span>
            <span class="btn close"><svg width="14" height="14"><use href="#b-close"/></svg></span>
        </div>`).join("")}
    </div>`).join("");

// label and tab width in pixels
const tabs = [
    ["قشکر,Daily", 83],
    ["قاسمین,Daily", 88],
    ["وپاسار,Daily", 85],
    ["لابسا,Daily", 77],
    ["پترول,Daily", 77],
    ["ونوین,Daily", 81],
    ["کپشیر,Daily", 81],
    ["اخابر,Daily", 74],
    ["شگل,Monthly", 97],
    ["کروی,Daily", 76],
    ["فرابورس,Daily", 94],
    ["قنیشا,Daily", 69]
];

document.getElementById("chart-tabs").innerHTML = tabs.map(([label, width], i) => {
    const cls = i === tabs.length - 1 ? "current" : i === tabs.length - 2 ? "last" : "";
    return `<span class="${cls}" style="width: ${width}px">${label}</span>`;
}).join("") +
    '<svg width="6" height="8"><path d="M5 0v8L1 4z" fill="#000"/></svg>' +
    '<svg width="16" height="8"><path d="M6 0v8l4-4z" fill="#999"/></svg>';
```
